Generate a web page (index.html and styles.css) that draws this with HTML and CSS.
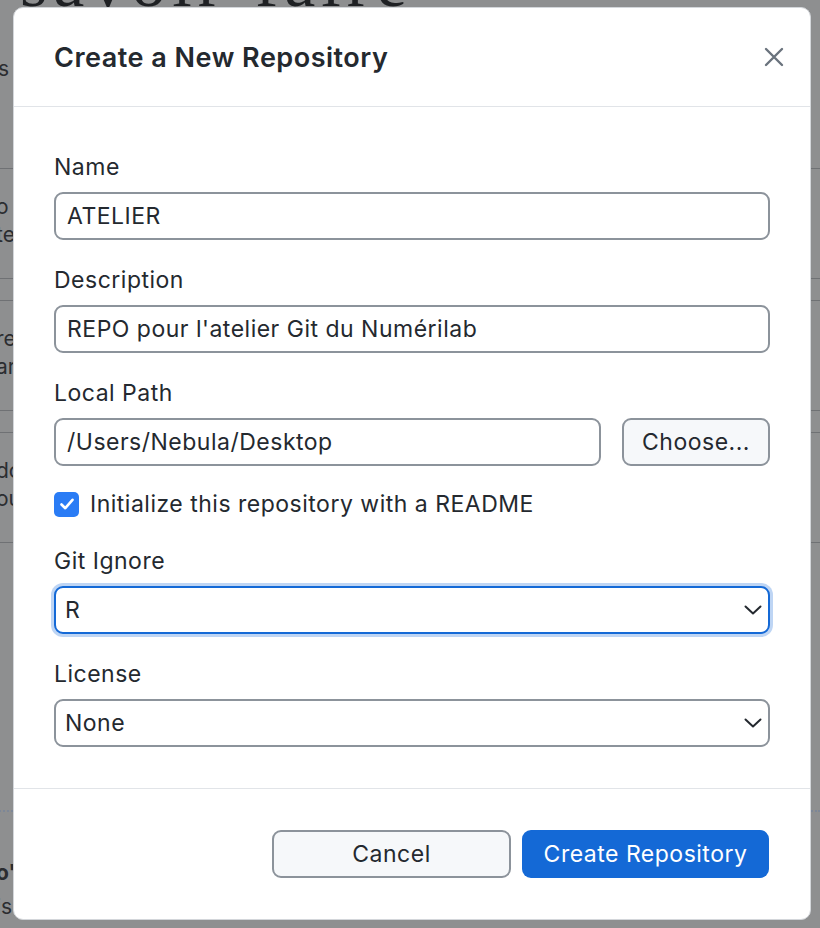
FILE: index.html
```html
<!DOCTYPE html>
<html lang="en">
<head>
<meta charset="utf-8">
<title>Create a New Repository</title>
<link rel="stylesheet" href="styles.css">
</head>
<body>
<div class="page">
  <div class="bg-hero">savoir-faire</div>
  <div class="bg-col">
    <div class="bg-s">s</div>
    <div class="bg-row"><span>o</span><span>te</span></div>
    <div class="bg-row"><span>re</span><span>ar</span></div>
    <div class="bg-row"><span>do</span><span>ou</span></div>
    <div class="bg-foot"><b>o'</b><span>is</span></div>
  </div>
</div>

<div class="modal" role="dialog" aria-labelledby="dlg-title">
  <header class="modal-header">
    <h1 id="dlg-title" class="modal-title">Create a New Repository</h1>
    <button class="close-btn" aria-label="Close">
      <svg width="20" height="20" viewBox="0 0 20 20"><path d="M2 2 L18 18 M18 2 L2 18" stroke="currentColor" stroke-width="2.4" stroke-linecap="round" fill="none"/></svg>
    </button>
  </header>

  <div class="modal-body">
    <div class="field">
      <label class="label">Name</label>
      <div class="input">ATELIER</div>
    </div>
    <div class="field">
      <label class="label">Description</label>
      <div class="input">REPO pour l'atelier Git du Numérilab</div>
    </div>
    <div class="field">
      <label class="label">Local Path</label>
      <div class="path-row">
        <div class="input grow">/Users/Nebula/Desktop</div>
        <button class="btn btn-secondary btn-choose">Choose...</button>
      </div>
    </div>
    <div class="check-row">
      <span class="checkbox">
        <svg width="16" height="16" viewBox="0 0 16 16"><path d="M2.5 8.5 L6.3 12.2 L13.5 3.8" stroke="#fff" stroke-width="2.6" stroke-linecap="round" stroke-linejoin="round" fill="none"/></svg>
      </span>
      <span class="check-label">Initialize this repository with a README</span>
    </div>
    <div class="field">
      <label class="label">Git Ignore</label>
      <div class="input select focused">R<svg class="chev" width="18" height="10" viewBox="0 0 18 10"><path d="M1.5 1.5 L9 8.5 L16.5 1.5" stroke="#24292f" stroke-width="2" stroke-linecap="round" stroke-linejoin="round" fill="none"/></svg></div>
    </div>
    <div class="field last">
      <label class="label">License</label>
      <div class="input select">None<svg class="chev" width="18" height="10" viewBox="0 0 18 10"><path d="M1.5 1.5 L9 8.5 L16.5 1.5" stroke="#24292f" stroke-width="2" stroke-linecap="round" stroke-linejoin="round" fill="none"/></svg></div>
    </div>
  </div>

  <footer class="modal-footer">
    <button class="btn btn-secondary btn-cancel">Cancel</button>
    <button class="btn btn-primary">Create Repository</button>
  </footer>
</div>
</body>
</html>
```

FILE: styles.css
```css
* { box-sizing: border-box; }

html, body {
  margin: 0;
  padding: 0;
}

body {
  width: 820px;
  height: 928px;
  overflow: hidden;
  background: #8e8f90;
  font-family: "Inter", "Liberation Sans", sans-serif;
  color: #24292f;
  position: relative;
}

/* background page (dimmed behind the dialog) */
.page {
  color: #2b2d30;
}

.bg-hero {
  font-family: "Liberation Serif", serif;
  font-size: 70px;
  line-height: 1;
  margin-top: -52px;
  padding-left: 20px;
  letter-spacing: 6px;
  color: #1f2124;
}

.bg-col {
  font-size: 21px;
  line-height: 28px;
  margin-left: -4px;
}

.bg-s {
  margin-top: 37px;
  padding-left: 2px;
  height: 113px;
}

.bg-row {
  display: flex;
  flex-direction: column;
  border-top: 1px solid #6f7174;
  border-bottom: 1px solid #6f7174;
  padding: 24px 0 29px;
  margin-bottom: 21px;
}

.bg-foot {
  display: flex;
  flex-direction: column;
  margin-top: 267px;
  border-top: 2px dotted #7d8797;
  padding-top: 44px;
  line-height: 34px;
}

.bg-foot b { font-weight: 700; }

/* dialog */
.modal {
  position: absolute;
  left: 13px;
  top: 7px;
  width: 798px;
  height: 913px;
  background: #fff;
  border: 1px solid #d3d6da;
  border-radius: 10px;
  display: flex;
  flex-direction: column;
}

.modal-header {
  height: 99px;
  display: flex;
  align-items: center;
  justify-content: space-between;
  padding: 0 26px 0 40px;
  border-bottom: 1px solid #e1e4e8;
  flex-shrink: 0;
}

.modal-title {
  margin: 0;
  font-size: 27px;
  font-weight: 600;
  color: #24292f;
  letter-spacing: 0.5px;
}

.close-btn {
  border: 0;
  background: none;
  padding: 0;
  color: #6a737d;
  width: 20px;
  height: 20px;
  display: flex;
}

.modal-body {
  padding: 47px 40px 0 40px;
  flex: 1;
  border-bottom: 1px solid #e1e4e8;
}

.field {
  display: flex;
  flex-direction: column;
  margin-bottom: 27px;
}

.field.last { margin-bottom: 0; }

.label {
  font-size: 23px;
  line-height: 26px;
  letter-spacing: 0.5px;
  margin-bottom: 12px;
  color: #24292f;
}

.input {
  height: 48px;
  border: 2px solid #8c939b;
  border-radius: 9px;
  padding: 0 11px;
  font-size: 23px;
  letter-spacing: 0.5px;
  display: flex;
  align-items: center;
  color: #24292f;
  background: #fff;
}

.input.select {
  justify-content: space-between;
  padding-left: 9px;
  padding-right: 6px;
}

.input.focused {
  border-color: #1469d6;
  box-shadow: 0 0 0 3px rgba(20, 105, 214, 0.28);
}

.chev { flex-shrink: 0; }

.path-row {
  display: flex;
  gap: 21px;
}

.grow { flex: 1; }

.check-row {
  display: flex;
  align-items: center;
  gap: 11px;
  height: 26px;
  margin-top: -2px;
  margin-bottom: 31px;
}

.checkbox {
  width: 25px;
  height: 25px;
  border-radius: 5px;
  background: #2a7cf5;
  display: flex;
  align-items: center;
  justify-content: center;
}

.check-label {
  font-size: 23px;
  letter-spacing: 0.5px;
  color: #24292f;
}

.btn {
  height: 48px;
  border-radius: 9px;
  font-family: inherit;
  font-size: 23px;
  letter-spacing: 0.5px;
  display: flex;
  align-items: center;
  justify-content: center;
  padding: 0;
}

.btn-secondary {
  background: #f6f8fa;
  border: 2px solid #8c939b;
  color: #24292f;
}

.btn-choose { width: 148px; }
.btn-cancel { width: 239px; }

.btn-primary {
  width: 247px;
  background: #1469d6;
  border: 0;
  color: #fff;
}

.modal-footer {
  display: flex;
  justify-content: flex-end;
  gap: 11px;
  padding: 41px 41px 0 0;
  height: 130px;
  flex-shrink: 0;
}
```
